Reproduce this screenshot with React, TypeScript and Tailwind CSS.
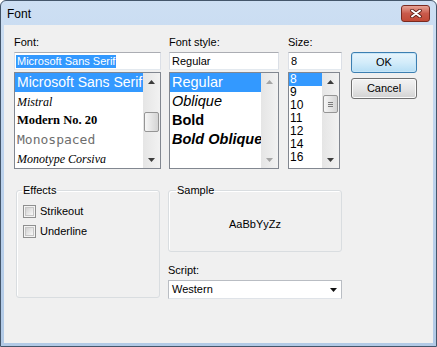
import React from "react";

function Arrow({ dir, color }: { dir: "up" | "down"; color: string }) {
  return (
    <svg width="7" height="4" viewBox="0 0 7 4">
      <path d={dir === "up" ? "M0 4 L3.5 0 L7 4 Z" : "M0 0 L7 0 L3.5 4 Z"} fill={color} />
    </svg>
  );
}

function ScrollBar({
  spacerClass,
  thumbClass,
  grip,
  color,
}: {
  spacerClass?: string;
  thumbClass?: string;
  grip?: boolean;
  color: string;
}) {
  return (
    <div className="w-[17px] h-full flex flex-col shrink-0 bg-gradient-to-r from-[#e5e5e5] to-[#f2f2f2]">
      <div className="h-[17px] flex items-center justify-center shrink-0">
        <Arrow dir="up" color={color} />
      </div>
      <div className="flex-1 flex flex-col">
        {thumbClass ? (
          <>
            <div className={spacerClass} />
            <div
              className={
                "mx-[1px] rounded-[2px] border border-[#959595] bg-gradient-to-r from-[#f6f6f6] to-[#d4d4d4] flex flex-col items-center justify-center gap-[1px] " +
                thumbClass
              }
            >
              {grip ? (
                <>
                  <div className="w-[5px] h-[1px] bg-[#7c7c7c]" />
                  <div className="w-[5px] h-[1px] bg-[#7c7c7c]" />
                  <div className="w-[5px] h-[1px] bg-[#7c7c7c]" />
                </>
              ) : null}
            </div>
          </>
        ) : null}
      </div>
      <div className="h-[17px] flex items-center justify-center shrink-0">
        <Arrow dir="down" color={color} />
      </div>
    </div>
  );
}

function CheckBox({ label }: { label: string }) {
  return (
    <div className="flex items-center h-[13px]">
      <div className="w-[13px] h-[13px] border border-[#8e8f8f] bg-[#f4f4f4] p-[1px]">
        <div className="w-full h-full border border-[#c6c6c6] bg-gradient-to-br from-[#d2d2d2] to-[#f8f8f8]" />
      </div>
      <span className="ml-[4px] text-[11px] leading-[13px]">{label}</span>
    </div>
  );
}

export default function App() {
  return (
    <div className="w-[437px] h-[347px] bg-white">
      <div className="w-[437px] h-[347px] flex flex-col border border-[#44566b] rounded-t-[6px] bg-gradient-to-b from-[#cddff3] via-[#bcd2ec] to-[#b2cae6] font-['Liberation_Sans',Arial,sans-serif] text-black">
        {/* Title bar */}
        <div className="h-[24px] shrink-0 flex items-center pl-[6px] pr-[6px]">
          <span className="text-[12px] leading-[14px] mt-[2px]">Font</span>
          <div className="ml-auto mt-[1px] w-[29px] h-[17px] rounded-[3px] border border-[#7a2a20] bg-gradient-to-b from-[#e6a396] via-[#c95a4b] to-[#c24a36] flex items-center justify-center">
            <svg width="12" height="9" viewBox="0 0 12 9">
              <path d="M2 1.5 L10 7.5 M10 1.5 L2 7.5" stroke="#5a1c14" strokeWidth="3.6" strokeLinecap="round" />
              <path d="M2 1.5 L10 7.5 M10 1.5 L2 7.5" stroke="#ffffff" strokeWidth="2" strokeLinecap="round" />
            </svg>
          </div>
        </div>

        {/* Client area */}
        <div className="flex-1 mx-[3px] mb-[3px] bg-[#f0f0f0] flex flex-col">
          {/* Top row */}
          <div className="flex pt-[11px] pl-[10px] items-start">
            {/* Font column */}
            <div className="w-[147px] flex flex-col">
              <div className="h-[13px] leading-[13px] text-[11px]">Font:</div>
              <div className="mt-[3px] h-[18px] border border-[#abadb3] border-x-[#dbdfe6] border-b-[#e3e9ef] bg-white flex items-center pl-[1px]">
                <span className="bg-[#3399ff] text-white text-[11px] leading-[13px] px-[1px] whitespace-nowrap">
                  Microsoft Sans Serif
                </span>
              </div>
              <div className="mt-[2px] h-[97px] border border-[#828790] bg-white flex">
                <div className="flex-1 min-w-0 flex flex-col overflow-hidden">
                  <div className="h-[19px] shrink-0 bg-[#3399ff] text-white text-[14px] pl-[2px] flex items-center whitespace-nowrap">
                    Microsoft Sans Serif
                  </div>
                  <div className="h-[19px] shrink-0 pl-[2px] flex items-center whitespace-nowrap font-['Liberation_Serif',serif] italic text-[12px]">
                    Mistral
                  </div>
                  <div className="h-[19px] shrink-0 pl-[2px] flex items-center whitespace-nowrap font-['Liberation_Serif',serif] font-bold text-[12.5px]">
                    Modern No. 20
                  </div>
                  <div className="h-[19px] shrink-0 pl-[2px] flex items-center whitespace-nowrap font-['DejaVu_Sans_Mono',monospace] text-[13px] text-[#6e6e6e]">
                    Monospaced
                  </div>
                  <div className="h-[19px] shrink-0 pl-[2px] flex items-center whitespace-nowrap font-['Liberation_Serif',serif] italic text-[12px]">
                    Monotype Corsiva
                  </div>
                </div>
                <ScrollBar spacerClass="h-[22px]" thumbClass="h-[20px]" color="#3c3c3c" />
              </div>
            </div>

            {/* Font style column */}
            <div className="ml-[8px] w-[110px] flex flex-col">
              <div className="h-[13px] leading-[13px] text-[11px]">Font style:</div>
              <div className="mt-[3px] h-[18px] border border-[#abadb3] border-x-[#dbdfe6] border-b-[#e3e9ef] bg-white flex items-center pl-[2px]">
                <span className="text-[11px] leading-[13px]">Regular</span>
              </div>
              <div className="mt-[2px] h-[97px] border border-[#828790] bg-white flex">
                <div className="flex-1 min-w-0 flex flex-col overflow-hidden text-[14.5px]">
                  <div className="h-[19px] shrink-0 bg-[#3399ff] text-white pl-[2px] flex items-center whitespace-nowrap">
                    Regular
                  </div>
                  <div className="h-[19px] shrink-0 pl-[2px] flex items-center whitespace-nowrap italic">Oblique</div>
                  <div className="h-[19px] shrink-0 pl-[2px] flex items-center whitespace-nowrap font-bold">Bold</div>
                  <div className="h-[19px] shrink-0 pl-[2px] flex items-center whitespace-nowrap font-bold italic">
                    Bold Oblique
                  </div>
                </div>
                <ScrollBar color="#a5a5a5" />
              </div>
            </div>

            {/* Size column */}
            <div className="ml-[9px] w-[54px] flex flex-col">
              <div className="h-[13px] leading-[13px] text-[11px]">Size:</div>
              <div className="mt-[3px] h-[18px] border border-[#abadb3] border-x-[#dbdfe6] border-b-[#e3e9ef] bg-white flex items-center pl-[2px]">
                <span className="text-[11px] leading-[13px]">8</span>
              </div>
              <div className="mt-[2px] w-[52px] h-[97px] border border-[#828790] bg-white flex">
                <div className="flex-1 min-w-0 flex flex-col overflow-hidden text-[12px] leading-[13px]">
                  <div className="h-[13px] shrink-0 bg-[#3399ff] text-white pl-[1px]">8</div>
                  <div className="h-[13px] shrink-0 pl-[1px]">9</div>
                  <div className="h-[13px] shrink-0 pl-[1px]">10</div>
                  <div className="h-[13px] shrink-0 pl-[1px]">11</div>
                  <div className="h-[13px] shrink-0 pl-[1px]">12</div>
                  <div className="h-[13px] shrink-0 pl-[1px]">14</div>
                  <div className="h-[13px] shrink-0 pl-[1px]">16</div>
                </div>
                <ScrollBar spacerClass="h-[5px]" thumbClass="h-[18px]" grip color="#3c3c3c" />
              </div>
            </div>

            {/* Buttons */}
            <div className="ml-[9px] w-[66px] flex flex-col pt-[16px]">
              <div className="h-[21px] rounded-[3px] border border-[#3c7fb1] bg-gradient-to-b from-[#e8f5fc] via-[#d3ecfa] to-[#b6def5] flex items-center justify-center text-[11px] shadow-[inset_0_0_0_1px_#c8e6f8]">
                OK
              </div>
              <div className="mt-[5px] h-[21px] rounded-[3px] border border-[#707070] bg-gradient-to-b from-[#f3f3f3] via-[#e6e6e6] to-[#d2d2d2] flex items-center justify-center text-[11px] shadow-[inset_0_0_0_1px_#fafafa]">
                Cancel
              </div>
            </div>
          </div>

          {/* Bottom row */}
          <div className="flex mt-[15px] pl-[12px] items-start">
            <fieldset className="w-[144px] h-[114px] border border-[#d9dde0] rounded-[3px] pl-[5px] shadow-[inset_1px_1px_0_#ffffff]">
              <legend className="px-[1px] text-[11px] leading-[13px]">Effects</legend>
              <div className="flex flex-col gap-[7px] pt-[8px] pl-[1px]">
                <CheckBox label="Strikeout" />
                <CheckBox label="Underline" />
              </div>
            </fieldset>

            <div className="ml-[8px] w-[174px] flex flex-col">
              <fieldset className="h-[68px] border border-[#d9dde0] rounded-[3px] pl-[7px] shadow-[inset_1px_1px_0_#ffffff]">
                <legend className="px-[1px] text-[11px] leading-[13px]">Sample</legend>
                <div className="h-[54px] -ml-[7px] flex items-center justify-center text-[11px]">AaBbYyZz</div>
              </fieldset>
              <div className="mt-[12px] h-[13px] leading-[13px] text-[11px]">Script:</div>
              <div className="mt-[3px] h-[19px] border border-[#b9bdc3] border-b-[#dfe3e8] bg-white flex items-center pl-[3px] pr-[4px]">
                <span className="text-[11px] leading-[13px]">Western</span>
                <svg className="ml-auto" width="7" height="4" viewBox="0 0 7 4">
                  <path d="M0 0 L7 0 L3.5 4 Z" fill="#111111" />
                </svg>
              </div>
            </div>
          </div>
        </div>
      </div>
    </div>
  );
}
